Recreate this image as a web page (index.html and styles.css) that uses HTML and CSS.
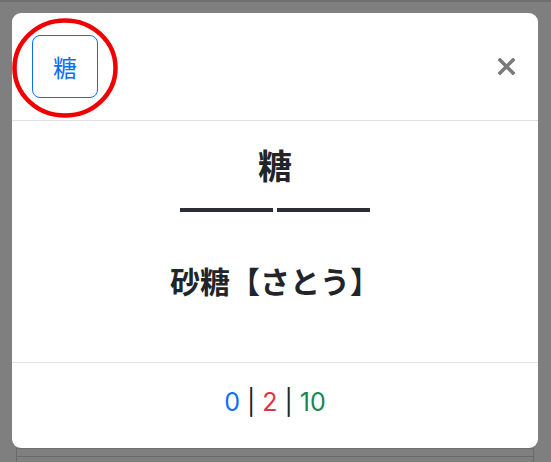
FILE: index.html
```html
<!DOCTYPE html>
<html lang="ja">
<head>
<meta charset="utf-8">
<link rel="stylesheet" href="styles.css">
</head>
<body>
<div class="topline"></div>
<div class="modal">
  <div class="modal-header">
    <button class="kanji-btn">糖</button>
    <button class="close-btn" aria-label="Close">
      <svg width="17" height="17" viewBox="0 0 17 17"><path d="M2 2 L15 15 M15 2 L2 15" stroke="#7a7a7a" stroke-width="3.6" stroke-linecap="square"/></svg>
    </button>
  </div>
  <div class="modal-body">
    <h2 class="kanji">糖</h2>
    <div class="dashes"><span class="dash"></span><span class="dash"></span></div>
    <h3 class="reading">砂糖【さとう】</h3>
  </div>
  <div class="modal-footer">
    <span class="num blue">0</span> <span class="sep">|</span> <span class="num red">2</span> <span class="sep">|</span> <span class="num green">10</span>
  </div>
  <svg class="ring" width="110" height="104" viewBox="0 0 110 104"><ellipse cx="53" cy="50" rx="50.5" ry="47.5" fill="none" stroke="#f00000" stroke-width="4.5"/></svg>
</div>
<div class="page-peek"><div class="peek-row"></div></div>
</body>
</html>
```
FILE: styles.css
```css
html, body {
  margin: 0;
  padding: 0;
}
body {
  background: #7f7f7f;
  width: 551px;
  height: 462px;
  overflow: hidden;
  font-family: "Noto Sans CJK JP", "Noto Sans", sans-serif;
  color: #212529;
}
.topline {
  height: 2px;
  background: #6f6f6f;
}
.modal {
  position: relative;
  margin: 11px 0 0 12px;
  width: 526px;
  height: 435px;
  background: #fff;
  border-radius: 9px;
  display: flex;
  flex-direction: column;
}
.modal-header {
  display: flex;
  align-items: center;
  justify-content: space-between;
  padding: 22px 23px 22px 20px;
  border-bottom: 1px solid #dee2e6;
}
.kanji-btn {
  width: 66px;
  height: 63px;
  border: 1px solid #0d6efd;
  border-radius: 8px;
  background: #fff;
  color: #0d6efd;
  font-family: "Noto Sans CJK JP", sans-serif;
  font-size: 24px;
  padding: 0;
  line-height: 1;
}
.close-btn {
  border: 0;
  background: transparent;
  padding: 0;
  width: 17px;
  height: 17px;
  display: flex;
}
.modal-body {
  height: 241px;
  display: flex;
  flex-direction: column;
  align-items: center;
}
.kanji {
  margin: 24px 0 0;
  font-size: 34px;
  font-weight: 700;
  line-height: 40px;
}
.dashes {
  display: flex;
  gap: 4px;
  margin-top: 23px;
}
.dash {
  width: 93px;
  height: 4px;
  background: #2b2f33;
}
.reading {
  margin: 50px 0 0;
  font-size: 30px;
  font-weight: 700;
  line-height: 36px;
}
.modal-footer {
  flex: 1;
  border-top: 1px solid #dee2e6;
  display: flex;
  align-items: center;
  justify-content: center;
  font-family: "Inter", "Noto Sans", sans-serif;
  font-size: 25px;
  gap: 7px;
  padding-bottom: 8px;
}
.blue { color: #0d6efd; }
.red { color: #dc3545; }
.green { color: #198754; }
.sep { color: #212529; }
.ring {
  position: absolute;
  left: 0;
  top: 5px;
}
.page-peek {
  margin: 0 17px 0 16px;
  height: 20px;
  border-left: 1px solid #6a6a6a;
  border-right: 1px solid #6a6a6a;
  border-top: 1px solid #6e6e6e;
}
.peek-row {
  margin-top: 7px;
  border-top: 1px solid #6a6a6a;
}
```
